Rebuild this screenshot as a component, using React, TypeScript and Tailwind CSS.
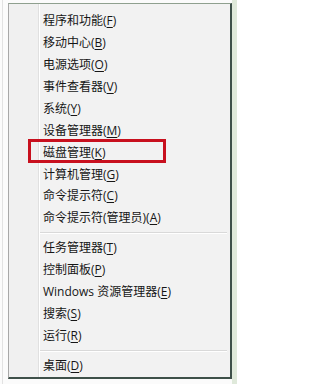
import React from "react";

type Item = { label: string; key: string; tail?: string };

const group1: Item[] = [
  { label: "程序和功能", key: "F" },
  { label: "移动中心", key: "B" },
  { label: "电源选项", key: "O" },
  { label: "事件查看器", key: "V" },
  { label: "系统", key: "Y" },
  { label: "设备管理器", key: "M" },
  { label: "磁盘管理", key: "K" },
  { label: "计算机管理", key: "G" },
  { label: "命令提示符", key: "C" },
  { label: "命令提示符(管理员)", key: "A" },
];

const group2: Item[] = [
  { label: "任务管理器", key: "T" },
  { label: "控制面板", key: "P" },
  { label: "Windows 资源管理器", key: "E" },
  { label: "搜索", key: "S" },
  { label: "运行", key: "R" },
];

const group3: Item[] = [{ label: "桌面", key: "D" }];

function Row({ item }: { item: Item }) {
  return (
    <div className="h-[22px] flex items-center pl-[3px] text-[12px] leading-none text-[#161616] whitespace-nowrap">
      <span>{item.label}</span>
      <span>(</span>
      <span className="underline underline-offset-[2px]">{item.key}</span>
      <span>)</span>
    </div>
  );
}

function Sep() {
  return (
    <div className="h-[8px] flex flex-col justify-center pr-[3px]">
      <div className="border-t border-[#d9d9d9] border-b border-b-white" />
    </div>
  );
}

export default function App() {
  return (
    <div
      className="relative w-[237px] h-[384px] bg-[#fbfbfb] flex"
      style={{ fontFamily: '"Open Sans", "Noto Sans CJK SC", sans-serif' }}
    >
      <div className="w-[2px]" />
      <div className="w-[1px] bg-[#e2e2e2]" />
      <div className="w-[5px]" />
      <div className="flex flex-col">
        <div className="h-[3px]" />
        <div className="w-[224px] h-[376px] flex bg-[#f0f0f0] border-t border-l border-t-[#8fa08f] border-l-[#a8a8a8] border-r-2 border-b-2 border-r-[#3e5049] border-b-[#3e5049]">
          <div className="w-[30px] border-r border-[#e0e0e0]" />
          <div className="flex-1 flex flex-col pt-[6px] border-l border-white bg-[#f2f2f2]">
            {group1.map((it) => (
              <Row key={it.label} item={it} />
            ))}
            <Sep />
            {group2.map((it) => (
              <Row key={it.label} item={it} />
            ))}
            <Sep />
            {group3.map((it) => (
              <Row key={it.label} item={it} />
            ))}
          </div>
        </div>
      </div>
      <div className="flex-1 bg-[#dfe9da]" />
      <div className="absolute left-[28px] top-[139px] w-[138px] h-[24px] border-[3px] border-[#c8101e]" />
    </div>
  );
}
